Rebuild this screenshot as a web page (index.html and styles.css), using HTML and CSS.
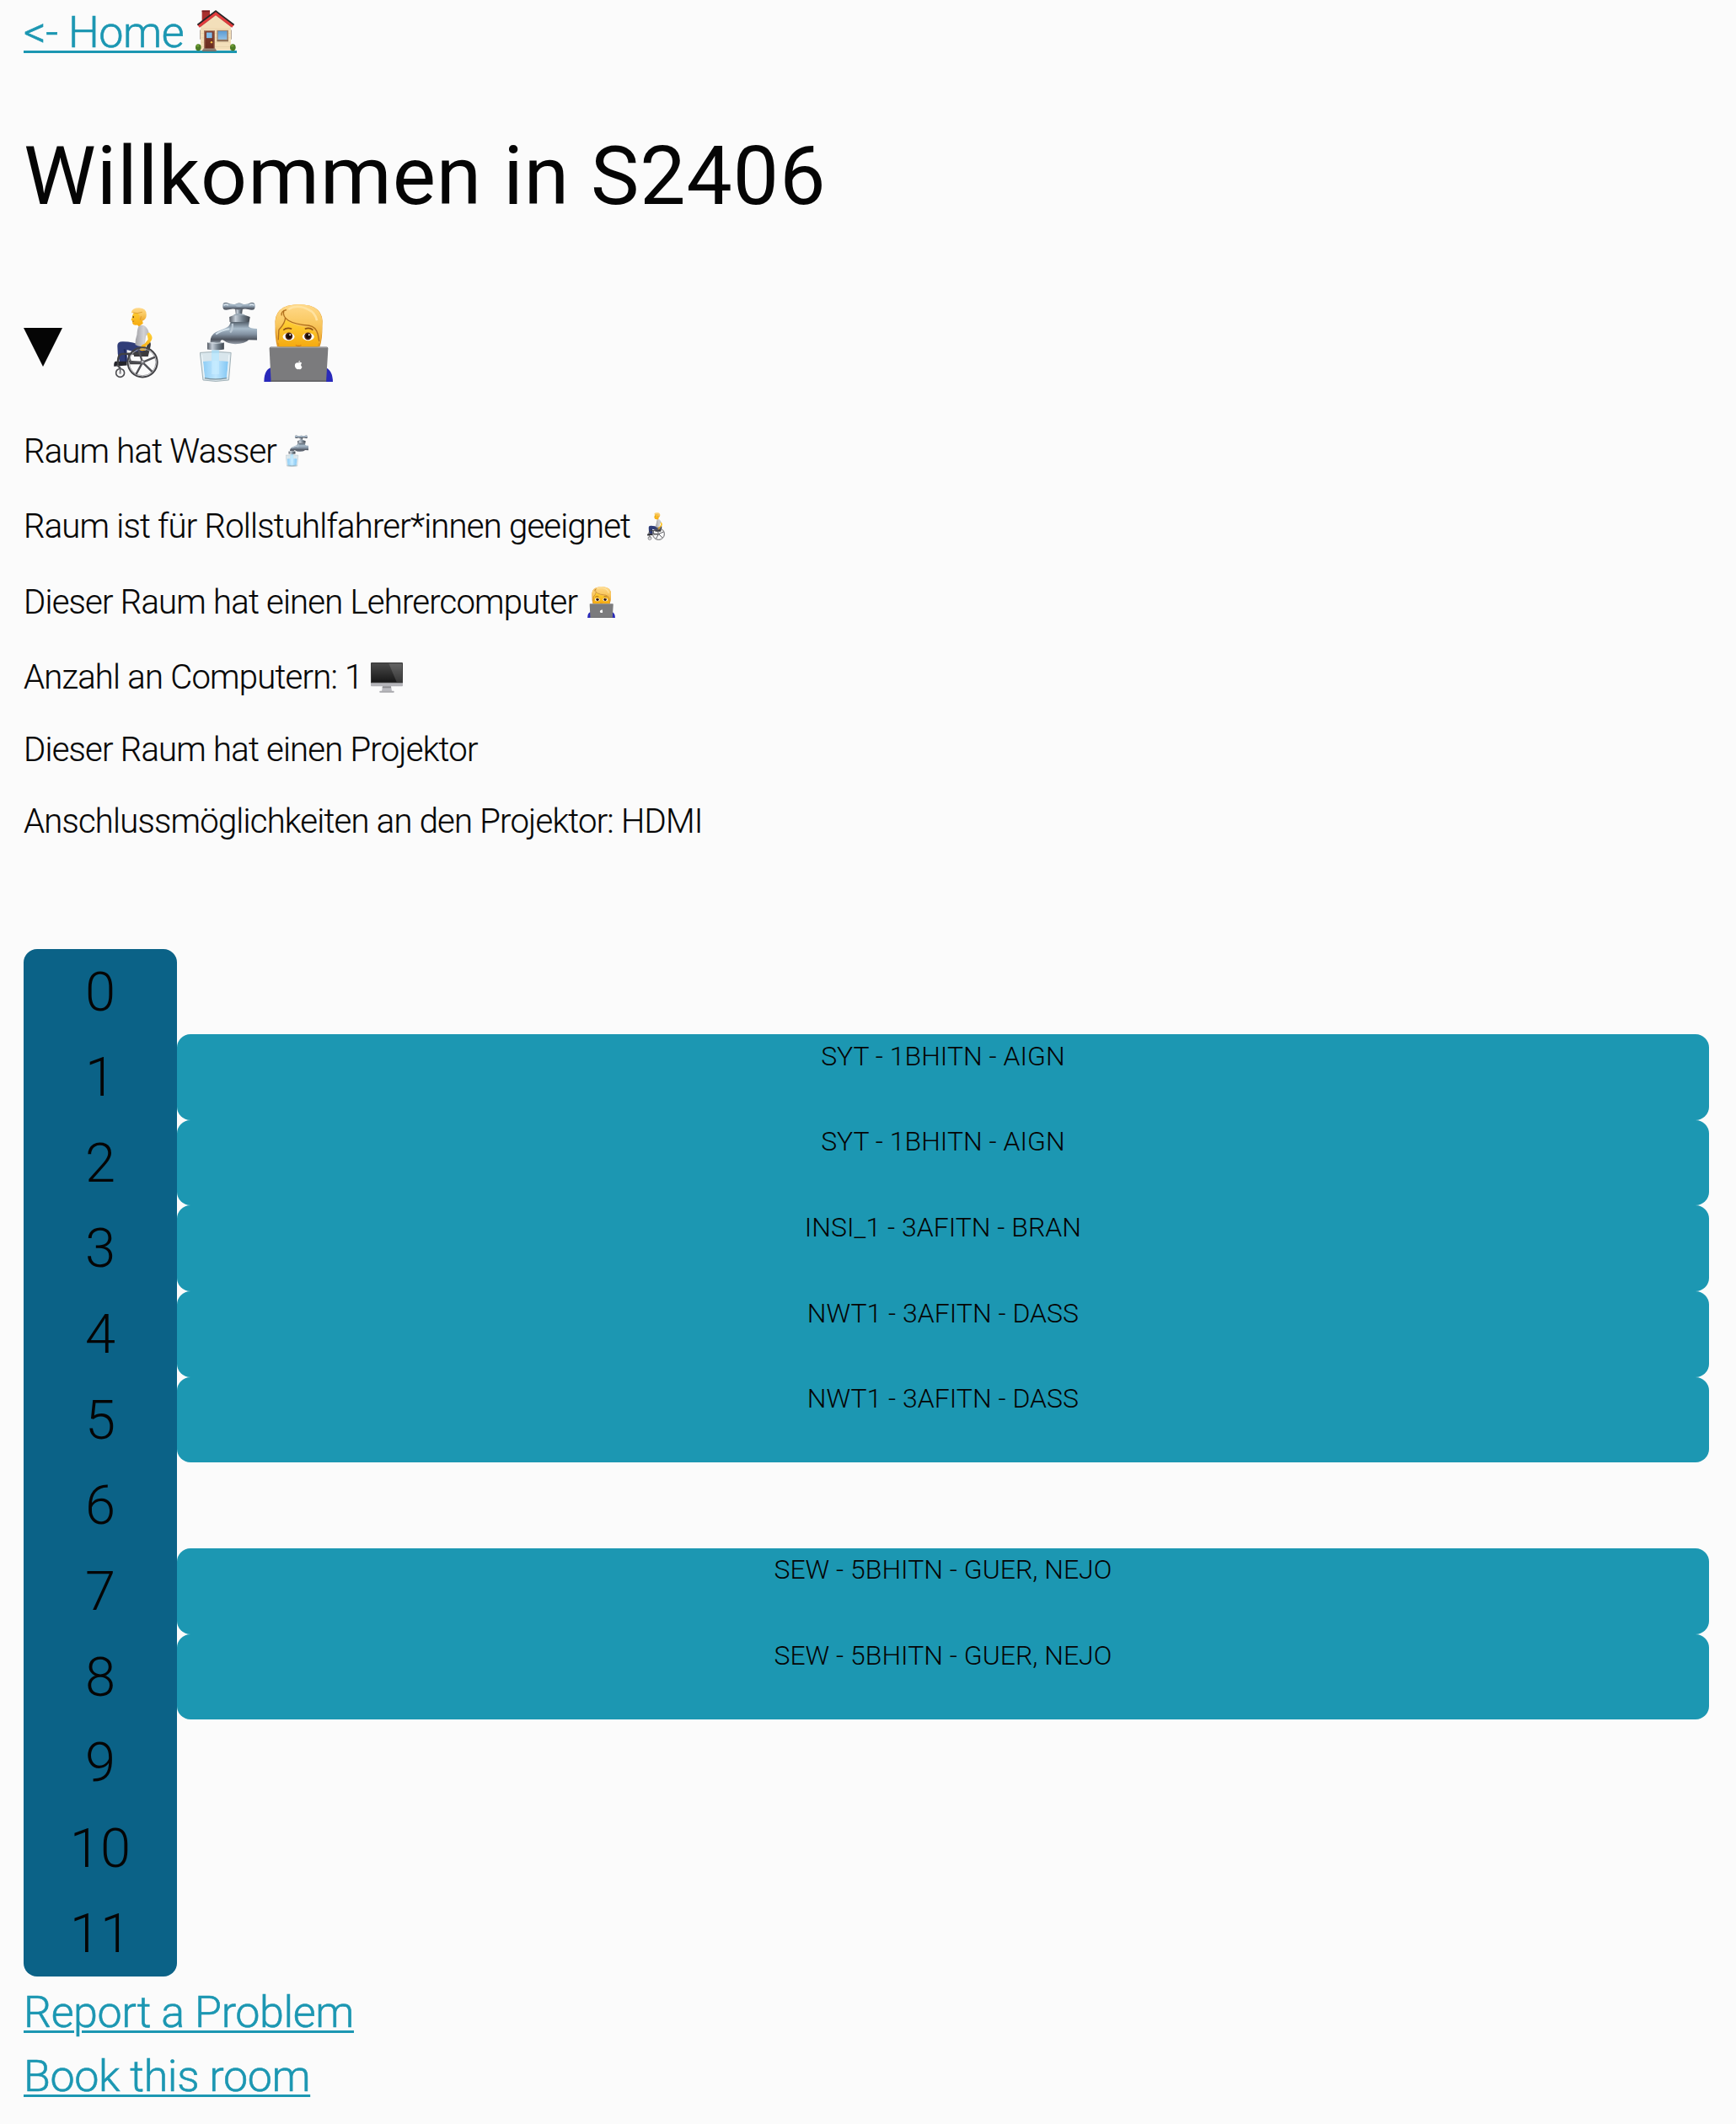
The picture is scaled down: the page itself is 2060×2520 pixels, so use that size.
FILE: index.html
```html
<!DOCTYPE html>
<html lang="de">
<head>
<meta charset="utf-8">
<title>Raum S2406</title>
<link rel="stylesheet" href="styles.css">
</head>
<body>
<svg class="sprites" aria-hidden="true">
  <defs>
    <linearGradient id="skin" x1="0" y1="0" x2="0" y2="1"><stop offset="0" stop-color="#ffd23a"/><stop offset="1" stop-color="#f5a90f"/></linearGradient>
    <linearGradient id="hair" x1="0" y1="0" x2="0" y2="1"><stop offset="0" stop-color="#ffd98a"/><stop offset=".5" stop-color="#f9c860"/><stop offset="1" stop-color="#eda72c"/></linearGradient>
    <linearGradient id="metal" x1="0" y1="0" x2="0" y2="1"><stop offset="0" stop-color="#56616d"/><stop offset=".3" stop-color="#a9bccb"/><stop offset=".55" stop-color="#8493a3"/><stop offset=".8" stop-color="#4d535d"/><stop offset="1" stop-color="#9aa2ad"/></linearGradient>
    <linearGradient id="metal-side"><stop offset="0" stop-color="#555b64"/><stop offset=".3" stop-color="#c5ced8"/><stop offset=".65" stop-color="#6f7c88"/><stop offset="1" stop-color="#3f454d"/></linearGradient>
    <linearGradient id="water"><stop offset="0" stop-color="#8fcdf5"/><stop offset=".5" stop-color="#bfe7ff"/><stop offset="1" stop-color="#82c6f3"/></linearGradient>
    <linearGradient id="shirt"><stop offset="0" stop-color="#a0a0a5"/><stop offset=".6" stop-color="#d2d2d5"/><stop offset="1" stop-color="#b4b4b9"/></linearGradient>
    <linearGradient id="screen" x1="0" y1="0" x2="0" y2="1"><stop offset="0" stop-color="#4a4a4a"/><stop offset="1" stop-color="#171717"/></linearGradient>
    <linearGradient id="silver" x1="0" y1="0" x2="0" y2="1"><stop offset="0" stop-color="#e9e9ec"/><stop offset="1" stop-color="#b1b1b6"/></linearGradient>
    <linearGradient id="door" x1="0" y1="0" x2="0" y2="1"><stop offset="0" stop-color="#7d3b2c"/><stop offset="1" stop-color="#6a2b20"/></linearGradient>
    <linearGradient id="pane" x1="0" y1="0" x2="0" y2="1"><stop offset="0" stop-color="#5c9bd3"/><stop offset="1" stop-color="#8fc0e6"/></linearGradient>
  </defs>

  <symbol id="house" viewBox="696 38 144 146">
    <path d="M719 39h28v30l-28 24z" fill="#a92f2d"/><path d="M719 39h28v5h-28z" fill="#7b1d20"/>
    <path d="M711 108h5v34h-5zM820 108h5v34h-5z" fill="#b5a79a"/>
    <path d="M714 90l54-44 54 44v90H714z" fill="#f3dfba"/>
    <path d="M716 104h104M716 120h104M716 136h104M716 152h104M716 168h104" stroke="#e3cba2" stroke-width="1.5"/>
    <path d="M703 91l65-49 65 49-7 8-58-44-58 44z" fill="#e33b3c"/>
    <path d="M703 90l65-49 65 49" fill="none" stroke="#272426" stroke-width="5"/>
    <path d="M710 99l58-44 58 44" fill="none" stroke="#b7272c" stroke-width="2"/>
    <path d="M726 110h39v66h-39z" fill="#a3735b"/><path d="M730 113h31v62h-31z" fill="url(#door)"/>
    <path d="M735 117h20v20h-20z" fill="#7fbbe9"/><circle cx="753" cy="152" r="3.5" fill="#f3bd43"/>
    <path d="M772 109h41v40h-41z" fill="#a58567"/><path d="M776 112h32v30h-32z" fill="url(#pane)"/>
    <path d="M773 144h40v5h-40z" fill="#8a6e58"/>
    <ellipse cx="706" cy="170" rx="10" ry="12" fill="#4c7c25"/><circle cx="704" cy="164" r="5" fill="#6f9c35"/>
    <ellipse cx="829" cy="170" rx="10" ry="12" fill="#4c7c25"/><circle cx="827" cy="164" r="5" fill="#6f9c35"/>
    <path d="M724 174h43l4 9h-51z" fill="#9b8b80"/><path d="M720 180h50v4h-50z" fill="#736961"/>
  </symbol>

  <symbol id="wheelchair" viewBox="405 74 160 252">
    <path d="M528 192q12 4 9 18l-9 38h-50l-6-22h48z" fill="#3b3a3d"/>
    <path d="M418 210q0-15 18-15 34-1 74 16l2 20q-34 3-60-7l1 44h-27q-9-28-8-58z" fill="#303d78"/>
    <path d="M443 222q6 20 6 44" fill="none" stroke="#202b5c" stroke-width="6"/>
    <path d="M410 266h42v14l-46 4q-2-12 4-18z" fill="#24242b"/>
    <path d="M495 138q20-8 32 14l5 14-12 8-4 33q-15 10-34-1 0-20 6-36 1-22 7-32z" fill="url(#shirt)"/>
    <path d="M472 100q-1 11-5 18l5 3 0 9q4 8 17 5l6 5 15-10-3-12 11-26-34-12z" fill="url(#skin)"/>
    <path d="M468 92q1-18 28-18 27 1 26 25 0 17-15 22l-7-4q-7-4-2-13-4-10-13-11-13-1-17-1z" fill="url(#hair)"/>
    <path d="M474 91q14 6 33-2M503 104l-3 13" fill="none" stroke="#d08a1c" stroke-width="2"/>
    <ellipse cx="475" cy="107" rx="2" ry="3.5" fill="#49301d"/><path d="M471 122q5 1 7-1" fill="none" stroke="#9d5316" stroke-width="2"/>
    <path d="M524 166l8-4q15 15 9 26-8 16-20 21l-4 17q-13 5-19-1 3-15 11-20l6-2 13-16z" fill="url(#skin)"/>
    <path d="M452 238h55M420 277q-2-36 14-38h24l8 34h44" fill="none" stroke="#414144" stroke-width="7"/>
    <path d="M417 278l12 13" stroke="#505053" stroke-width="7"/>
    <circle cx="428" cy="307" r="15" fill="none" stroke="#4d4d51" stroke-width="5"/>
    <path d="M428 290v17" stroke="#66666a" stroke-width="5"/><circle cx="428" cy="307" r="4" fill="#99999d"/>
    <circle cx="508" cy="269" r="53" fill="none" stroke="#424246" stroke-width="6"/>
    <circle cx="508" cy="269" r="48" fill="none" stroke="#a2a2a6" stroke-width="3"/>
    <path d="M508 269l-15-47M508 269l45-19M508 269l35 34M508 269l-23 43M508 269l-49-3" stroke="#505055" stroke-width="7"/>
    <circle cx="508" cy="268" r="8" fill="#66666b"/><circle cx="508" cy="267" r="4" fill="#bdbdc2"/>
  </symbol>

  <symbol id="faucet" viewBox="50 52 205 286">
    <path d="M176 74h28l-4 29h-20z" fill="url(#metal-side)"/>
    <path d="M132 66q0-14 14-11 23 9 34 4 11-5 22 0 12 5 32-4 14-3 14 12 0 17-14 15-20-8-32-3-12 5-22 0-13-5-34 3-14 1-14-16z" fill="url(#metal)"/>
    <ellipse cx="190" cy="64" rx="12" ry="6" fill="#a8b9c8"/>
    <path d="M137 65q5-8 15-1M243 65q-5-8-14-1" stroke="#dae4ed" stroke-width="5" fill="none"/>
    <path d="M172 98q18-10 39 0l4 8h-46z" fill="#9aa8b4"/>
    <path d="M156 106l13-5h46l15 5-3 18h-70z" fill="url(#metal-side)"/>
    <path d="M160 124h67l-2 16q5 8 30 8v41l-30-1q-12 14-48 15-25 0-43-14-10-3-10 8H88q-1-25 20-37l34-14q17-7 18-22z" fill="url(#metal)"/>
    <path d="M108 168q18-14 48-19" fill="none" stroke="#d1dfe9" stroke-width="6"/>
    <path d="M167 130q2 22-8 32" fill="none" stroke="#bac8d4" stroke-width="7"/>
    <path d="M77 198q28-5 60 0v24q-30 7-60 0z" fill="url(#metal-side)"/><path d="M80 198q28 5 55 0" stroke="#d1d8df" stroke-width="3" fill="none"/>
    <path d="M51 234q55-7 111 0l-8 98q-47 9-92 0z" fill="#d9e6ec" stroke="#a2b1b7" stroke-width="3"/>
    <path d="M93 225h26v44H93z" fill="#aedcf2"/>
    <path d="M62 266q44-6 91 0l-7 58q-38 8-78 0z" fill="url(#water)"/>
    <path d="M93 236h26v75H93z" fill="#c8edff" opacity=".7"/>
    <path d="M68 325q37 8 78 0" stroke="#758d98" stroke-width="4" fill="none"/>
    <path d="M58 242l8 80M155 242l-6 78" stroke="#f4fafc" stroke-width="3"/>
  </symbol>

  <symbol id="teacher" viewBox="278 62 247 277">
    <path d="M279 339q0-48 31-53h184q30 8 31 53z" fill="#2929ba"/>
    <path d="M326 214q-8-30-7-74-7-77 84-77 94 0 84 78 1 46-9 73z" fill="#e0951f"/>
    <path d="M320 140q-7-77 83-77 93 0 83 78l-6 60H327z" fill="url(#hair)"/>
    <path d="M331 158q14-14 25-42 30 25 88 30l26 22 5 20-4 28H333z" fill="url(#skin)"/>
    <path d="M350 83q-13 46 90 55 24 4 32 30l6 30q11-36 8-67-4-68-84-68-36 0-52 20z" fill="url(#hair)"/>
    <path d="M350 83q-13 46 90 55 24 4 31 30l5 26M359 82q-21 5-17 20M355 109q0 21-23 44l-2 36" fill="none" stroke="#b06e1c" stroke-width="4"/>
    <path d="M366 80q31-20 72 1 24 11 30 39" fill="none" stroke="#ffe3a1" stroke-width="8"/>
    <path d="M348 154q13-11 30-4M425 150q17-7 29 4" fill="none" stroke="#915214" stroke-width="5"/>
    <ellipse cx="367" cy="178" rx="21" ry="14" fill="#fff"/><ellipse cx="437" cy="178" rx="21" ry="14" fill="#fff"/>
    <circle cx="368" cy="176" r="13" fill="#4c2414"/><circle cx="436" cy="176" r="13" fill="#4c2414"/>
    <circle cx="368" cy="176" r="8" fill="#150b08"/><circle cx="436" cy="176" r="8" fill="#150b08"/>
    <circle cx="372" cy="171" r="3" fill="#fff"/><circle cx="440" cy="171" r="3" fill="#fff"/>
    <path d="M392 208q10 6 20 0" fill="none" stroke="#d47a14" stroke-width="4"/>
    <path d="M304 214h198q6 0 6 6l-7 119H304l-6-119q0-6 6-6z" fill="#7b7b7d"/>
    <path d="M302 216h202" stroke="#aaaaad" stroke-width="3"/><path d="M304 336h198" stroke="#59595b" stroke-width="3"/>
    <path d="M402 271q7-5 12 1-7 8 1 14-4 9-8 9-4-2-7 0-9-2-11-13 0-13 13-11zM402 270q0-6 6-7 0 6-6 7z" fill="#fff"/>
  </symbol>

  <symbol id="monitor" viewBox="0 0 114 108">
    <path d="M42 84h30l3 18H39z" fill="#bababf"/><path d="M42 85h30v6H41z" fill="#8d8d91"/>
    <rect x="31" y="101" width="52" height="6" rx="2" fill="#a9a9ad"/>
    <rect width="114" height="85" rx="3" fill="url(#silver)"/>
    <path d="M3 0h108q3 0 3 3v70H0V3q0-3 3-3z" fill="#3b3b3b"/><path d="M3 4h108v66H3z" fill="url(#screen)"/>
    <path d="M64 4h47v66h-19z" fill="#fff" opacity=".14"/>
  </symbol>
</svg>

<main class="page">
  <a class="link link-home" href="#">&lt;- Home <svg class="icon icon-house"><use href="#house"/></svg></a>
  <h1 class="title">Willkommen in S2406</h1>

  <section class="room">
    <div class="summary">
      <svg class="marker" viewBox="0 0 46 46"><path d="M0 0h46L23 46z"/></svg>
      <svg class="badge-wheelchair"><use href="#wheelchair"/></svg>
      <svg class="badge-faucet"><use href="#faucet"/></svg>
      <svg class="badge-teacher"><use href="#teacher"/></svg>
    </div>
    <div class="facts">
      <p class="fact">Raum hat Wasser<svg class="icon icon-faucet"><use href="#faucet"/></svg></p>
      <p class="fact">Raum ist für Rollstuhlfahrer*innen geeignet<svg class="icon icon-wheelchair"><use href="#wheelchair"/></svg></p>
      <p class="fact">Dieser Raum hat einen Lehrercomputer<svg class="icon icon-teacher"><use href="#teacher"/></svg></p>
      <p class="fact">Anzahl an Computern: 1<svg class="icon icon-monitor"><use href="#monitor"/></svg></p>
      <p class="fact">Dieser Raum hat einen Projektor</p>
      <p class="fact">Anschlussmöglichkeiten an den Projektor: HDMI</p>
    </div>
  </section>

  <section class="timetable">
    <div class="hours">
      <div>0</div><div>1</div><div>2</div><div>3</div><div>4</div><div>5</div><div>6</div><div>7</div><div>8</div><div>9</div><div>10</div><div>11</div>
    </div>
    <div class="lessons">
      <div></div>
      <div class="lesson">SYT - 1BHITN - AIGN</div>
      <div class="lesson">SYT - 1BHITN - AIGN</div>
      <div class="lesson">INSI_1 - 3AFITN - BRAN</div>
      <div class="lesson">NWT1 - 3AFITN - DASS</div>
      <div class="lesson">NWT1 - 3AFITN - DASS</div>
      <div></div>
      <div class="lesson">SEW - 5BHITN - GUER, NEJO</div>
      <div class="lesson">SEW - 5BHITN - GUER, NEJO</div>
      <div></div><div></div><div></div>
    </div>
  </section>

  <nav class="actions">
    <a class="link" href="#">Report a Problem</a>
    <a class="link" href="#">Book this room</a>
  </nav>
</main>
</body>
</html>
```

FILE: styles.css
```css
* { box-sizing: border-box; }

body {
  margin: 0;
  background: #fbfbfb;
  color: #050505;
  font-family: Roboto, "Liberation Sans", sans-serif;
  font-weight: 300;
}

.sprites { position: absolute; width: 0; height: 0; }

.page { padding: 0 32px 0 28px; }

.link {
  display: block;
  width: fit-content;
  height: 76px;
  color: #1c97b2;
  font-size: 52px;
  letter-spacing: -0.4px;
  line-height: 77px;
  text-decoration: underline;
  text-decoration-thickness: 3px;
  text-underline-offset: 4px;
  -webkit-text-stroke: 0.6px #1c97b2;
}

.link-home {
  text-decoration: none;
  background: linear-gradient(#1c97b2, #1c97b2) 0 60px / 100% 3px no-repeat;
}

.icon { display: inline-block; }
.icon-house { width: 48px; height: 49px; margin: 0 1px; vertical-align: -5px; }

.title {
  margin: 76px 0 0;
  font-size: 96.6px;
  font-weight: 400;
  letter-spacing: 1px;
  line-height: 114px;
}

.summary {
  display: flex;
  align-items: flex-end;
  height: 96px;
  margin-top: 91px;
}

.marker { width: 46px; height: 46px; margin: 0 61px 18px 0; fill: #050505; }
.badge-wheelchair { width: 53px; height: 84px; margin: 0 49px 4px 0; }
.badge-faucet { width: 68px; height: 95px; margin-right: 8px; }
.badge-teacher { width: 82px; height: 92px; }

.facts {
  display: grid;
  grid-template-rows: 89px 90px 89px 86px 85px 48px;
  margin-top: 59px;
}

.fact {
  height: 48px;
  margin: 0;
  font-size: 40px;
  letter-spacing: -0.76px;
  line-height: 48px;
  -webkit-text-stroke: 0.2px #050505;
}

.icon-faucet { width: 27px; height: 38px; margin-left: 11px; vertical-align: -5px; }
.icon-wheelchair { width: 21px; height: 33px; margin-left: 20px; vertical-align: -3px; }
.icon-teacher { width: 33px; height: 37px; margin-left: 12px; vertical-align: -5px; }
.icon-monitor { width: 38px; height: 36px; margin-left: 10px; vertical-align: -5px; }

.timetable { display: flex; height: 1219.68px; margin-top: 126.6px; text-align: center; }

.hours, .lessons { display: grid; grid-template-rows: repeat(12, 101.64px); }

.hours {
  flex: 1;
  border-radius: 16px;
  background: #0b6287;
  font-size: 65px;
  line-height: 103px;
}

.hours > div { height: 101.64px; }

.lessons { flex: 10; font-size: 32px; line-height: 51px; }
.lesson { padding-top: 0.5px; border-radius: 16px; background: #1c97b2; }

.actions { margin-top: 3.72px; }
```
